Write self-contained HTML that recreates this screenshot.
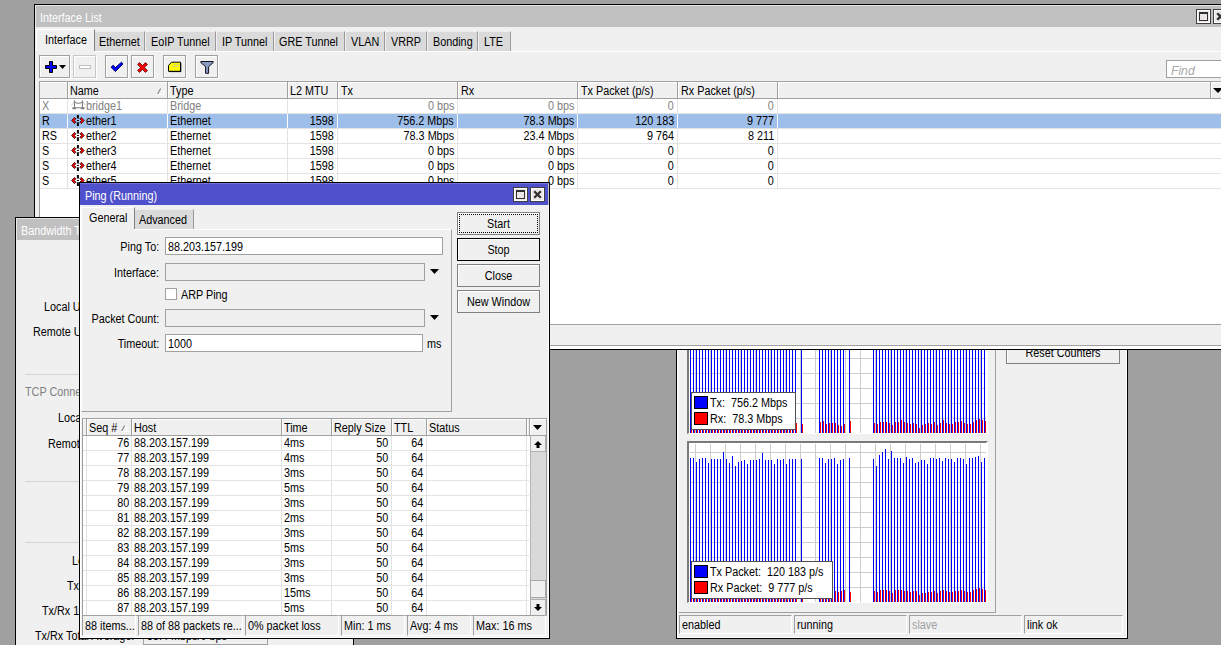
<!DOCTYPE html>
<html><head><meta charset="utf-8"><title>WinBox</title>
<style>
html,body{margin:0;padding:0}
body{width:1221px;height:645px;overflow:hidden;background:#a0a0a0;position:relative;font:12px/15px "Liberation Sans",sans-serif;color:#000}
div,span,svg{position:absolute;box-sizing:border-box;display:block}
.t{white-space:nowrap;height:15px;transform:scaleX(.9);transform-origin:0 0}
.r{transform-origin:100% 0}
.c{transform-origin:50% 0}
</style></head>
<body>
<div style="left:676px;top:300px;width:452px;height:339px;background:#f0f0f0;border:1px solid #000;box-shadow:inset 1px 0 0 #fff,inset -1px -1px 0 #fff"></div>
<div style="left:679px;top:320px;width:317px;height:293px;border-right:1px solid #a0a0a0;border-bottom:1px solid #a0a0a0"></div>
<div style="left:1006px;top:341px;width:114px;height:23px;background:#f0f0f0;border:1px solid #808080;box-shadow:inset 1px 1px 0 #fff"></div>
<span class="t c" style="left:1006px;top:346px;width:114px;text-align:center;">Reset Counters</span>
<div style="left:679px;top:615px;width:113px;height:19px;border-left:1px solid #a0a0a0;border-top:1px solid #a0a0a0;border-right:1px solid #fff;border-bottom:1px solid #fff"></div>
<span class="t" style="left:682px;top:618px;color:#000">enabled</span>
<div style="left:794px;top:615px;width:113px;height:19px;border-left:1px solid #a0a0a0;border-top:1px solid #a0a0a0;border-right:1px solid #fff;border-bottom:1px solid #fff"></div>
<span class="t" style="left:797px;top:618px;color:#000">running</span>
<div style="left:909px;top:615px;width:113px;height:19px;border-left:1px solid #a0a0a0;border-top:1px solid #a0a0a0;border-right:1px solid #fff;border-bottom:1px solid #fff"></div>
<span class="t" style="left:912px;top:618px;color:#a0a0a0">slave</span>
<div style="left:1024px;top:615px;width:99px;height:19px;border-left:1px solid #a0a0a0;border-top:1px solid #a0a0a0;border-right:1px solid #fff;border-bottom:1px solid #fff"></div>
<span class="t" style="left:1027px;top:618px;color:#000">link ok</span>
<div style="left:687px;top:330px;width:301px;height:104px;background:#fff;border-left:2px solid #7a7a7a;border-top:2px solid #7a7a7a;border-right:2px solid #fff;border-bottom:1px solid #fff"></div>
<svg style="left:689px;top:332px" width="297" height="101" viewBox="689 332 297 101" shape-rendering="crispEdges"><path d="M695 332v101M710 332v101M725 332v101M740 332v101M755 332v101M770 332v101M785 332v101M800 332v101M815 332v101M830 332v101M845 332v101M860 332v101M875 332v101M890 332v101M905 332v101M920 332v101M935 332v101M950 332v101M965 332v101M980 332v101M689 358h297M689 373h297M689 388h297M689 403h297M689 418h297" stroke="#cdcdcd" stroke-width="1" fill="none" transform="translate(.5 .5)"/><path d="M690 330V433M693 330V433M696 330V433M699 330V433M702 330V433M705 330V433M708 330V433M711 330V433M714 330V433M717 330V433M720 330V433M723 330V433M726 330V433M729 330V433M732 330V433M735 330V433M738 330V433M741 330V433M744 330V433M747 330V433M750 330V433M753 330V433M756 330V433M759 330V433M762 330V433M765 330V433M768 330V433M771 330V433M774 330V433M777 330V433M780 330V433M783 330V433M786 330V433M789 330V433M792 330V433M795 330V433M801 330V433M819 330V433M822 330V433M825 330V433M828 330V433M831 330V433M834 330V433M837 330V433M840 330V433M843 330V433M849 330V433M873 330V433M876 330V433M879 330V433M882 330V433M885 330V433M888 330V433M891 330V433M894 330V433M897 330V433M900 330V433M903 330V433M906 330V433M909 330V433M912 330V433M915 330V433M918 330V433M921 330V433M924 330V433M927 330V433M930 330V433M933 330V433M936 330V433M939 330V433M942 330V433M945 330V433M948 330V433M951 330V433M954 330V433M957 330V433M960 330V433M963 330V433M966 330V433M969 330V433M972 330V433M975 330V433M978 330V433M981 330V433M984 330V433" stroke="#0000ff" stroke-width="1" fill="none" transform="translate(.5 0)"/><path d="M691 423V433M694 422V433M697 423V433M700 424V433M703 425V433M706 423V433M709 424V433M712 423V433M715 424V433M718 424V433M721 424V433M724 423V433M727 424V433M730 424V433M733 423V433M736 423V433M739 423V433M742 423V433M745 422V433M748 422V433M751 422V433M754 424V433M757 425V433M760 423V433M763 424V433M766 424V433M769 425V433M772 424V433M775 425V433M778 423V433M781 423V433M784 425V433M787 423V433M790 422V433M793 424V433M796 423V433M802 424V433M820 422V433M823 421V433M826 424V433M829 423V433M832 423V433M835 423V433M838 425V433M841 426V433M844 424V433M850 421V433M874 423V433M877 424V433M880 422V433M883 422V433M886 422V433M889 423V433M892 425V433M895 422V433M898 422V433M901 420V433M904 422V433M907 423V433M910 424V433M913 423V433M916 424V433M919 428V433M922 425V433M925 424V433M928 423V433M931 424V433M934 422V433M937 425V433M940 423V433M943 420V433M946 423V433M949 424V433M952 424V433M955 422V433M958 422V433M961 421V433M964 423V433M967 424V433M970 424V433M973 422V433M976 420V433M979 419V433M982 420V433M985 421V433" stroke="#ff0000" stroke-width="1" fill="none" transform="translate(.5 0)"/></svg>
<div style="left:687px;top:441px;width:301px;height:162px;background:#fff;border-left:2px solid #7a7a7a;border-top:2px solid #7a7a7a;border-right:2px solid #fff;border-bottom:1px solid #fff"></div>
<svg style="left:689px;top:443px" width="297" height="159" viewBox="689 443 297 159" shape-rendering="crispEdges"><path d="M695 443v159M710 443v159M725 443v159M740 443v159M755 443v159M770 443v159M785 443v159M800 443v159M815 443v159M830 443v159M845 443v159M860 443v159M875 443v159M890 443v159M905 443v159M920 443v159M935 443v159M950 443v159M965 443v159M980 443v159M689 452h297M689 467h297M689 482h297M689 497h297M689 512h297M689 527h297M689 542h297M689 557h297M689 572h297M689 587h297" stroke="#cdcdcd" stroke-width="1" fill="none" transform="translate(.5 .5)"/><path d="M690 458V602M693 458V602M696 462V602M699 459V602M702 458V602M705 458V602M708 463V602M711 459V602M714 459V602M717 459V602M720 459V602M723 452V602M726 459V602M729 463V602M732 456V602M735 466V602M738 462V602M741 461V602M744 460V602M747 464V602M750 460V602M753 460V602M756 460V602M759 459V602M762 453V602M765 460V602M768 460V602M771 460V602M774 464V602M777 459V602M780 460V602M783 459V602M786 464V602M789 459V602M792 459V602M795 459V602M801 459V602M819 458V602M822 458V602M825 463V602M828 459V602M831 459V602M834 458V602M837 464V602M840 460V602M843 459V602M849 458V602M873 459V602M876 466V602M879 455V602M882 452V602M885 449V602M888 459V602M891 451V602M894 458V602M897 458V602M900 458V602M903 463V602M906 457V602M909 459V602M912 458V602M915 463V602M918 462V602M921 460V602M924 460V602M927 464V602M930 458V602M933 458V602M936 459V602M939 458V602M942 461V602M945 458V602M948 459V602M951 459V602M954 462V602M957 458V602M960 458V602M963 459V602M966 464V602M969 458V602M972 458V602M975 457V602M978 456V602M981 462V602M984 458V602" stroke="#0000ff" stroke-width="1" fill="none" transform="translate(.5 0)"/><path d="M691 591V602M694 591V602M697 590V602M700 593V602M703 592V602M706 592V602M709 591V602M712 590V602M715 590V602M718 590V602M721 592V602M724 592V602M727 591V602M730 590V602M733 591V602M736 592V602M739 592V602M742 591V602M745 591V602M748 591V602M751 590V602M754 591V602M757 591V602M760 590V602M763 593V602M766 591V602M769 591V602M772 591V602M775 591V602M778 591V602M781 591V602M784 593V602M787 593V602M790 591V602M793 590V602M796 592V602M802 591V602M820 593V602M823 592V602M826 592V602M829 591V602M832 591V602M835 591V602M838 592V602M841 591V602M844 590V602M850 592V602M874 591V602M877 592V602M880 590V602M883 590V602M886 590V602M889 591V602M892 593V602M895 590V602M898 590V602M901 590V602M904 591V602M907 591V602M910 592V602M913 591V602M916 591V602M919 595V602M922 593V602M925 593V602M928 592V602M931 592V602M934 591V602M937 593V602M940 591V602M943 590V602M946 591V602M949 592V602M952 592V602M955 591V602M958 591V602M961 590V602M964 591V602M967 592V602M970 592V602M973 590V602M976 589V602M979 588V602M982 589V602M985 590V602" stroke="#ff0000" stroke-width="1" fill="none" transform="translate(.5 0)"/></svg>
<div style="left:691px;top:392px;width:105px;height:38px;background:#fff;border:1px solid #505050"></div>
<div style="left:694px;top:396px;width:14px;height:13px;background:#0000ff;border:1px solid #000"></div>
<span class="t" style="left:710px;top:396px;white-space:pre">Tx:  756.2 Mbps</span>
<div style="left:694px;top:412px;width:14px;height:13px;background:#ff0000;border:1px solid #000"></div>
<span class="t" style="left:710px;top:412px;white-space:pre">Rx:  78.3 Mbps</span>
<div style="left:691px;top:561px;width:142px;height:38px;background:#fff;border:1px solid #505050"></div>
<div style="left:694px;top:565px;width:14px;height:13px;background:#0000ff;border:1px solid #000"></div>
<span class="t" style="left:710px;top:565px;white-space:pre">Tx Packet:  120 183 p/s</span>
<div style="left:694px;top:581px;width:14px;height:13px;background:#ff0000;border:1px solid #000"></div>
<span class="t" style="left:710px;top:581px;white-space:pre">Rx Packet:  9 777 p/s</span>
<div style="left:34px;top:4px;width:1200px;height:346px;background:#f0f0f0;border:1px solid #000"></div>
<div style="left:35px;top:5px;width:1190px;height:22px;background:#c0c0c0;border-left:1px solid #e8e8e8;border-top:1px solid #e4e4e4"></div>
<span class="t" style="left:40px;top:11px;color:#fff">Interface List</span>
<div style="left:1196px;top:9px;width:15px;height:15px;background:#ebe7e7;border:1px solid #404040;box-shadow:inset 0 0 0 1px #fff"></div>
<div style="left:1199px;top:12px;width:9px;height:9px;border:1px solid #303030;border-top-width:2px"></div>
<div style="left:1213px;top:9px;width:15px;height:15px;background:#ebe7e7;border:1px solid #404040;box-shadow:inset 0 0 0 1px #fff"></div>
<svg style="left:1216px;top:12px" width="9" height="9" viewBox="0 0 9 9"><path d="M1.2 1.2 L7.8 7.8 M7.8 1.2 L1.2 7.8" stroke="#303030" stroke-width="2.3" fill="none"/></svg>
<div style="left:36px;top:29px;width:59px;height:22px;background:#f0f0f0;border-left:1px solid #fff;border-top:1px solid #fff;border-right:1px solid #808080"></div>
<span class="t" style="left:45px;top:33px;">Interface</span>
<div style="left:95px;top:31px;width:50px;height:20px;background:#dadada;border-top:1px solid #ececec;border-right:1px solid #9a9a9a"></div>
<span class="t" style="left:99px;top:35px;">Ethernet</span>
<div style="left:146px;top:31px;width:70px;height:20px;background:#dadada;border-top:1px solid #ececec;border-right:1px solid #9a9a9a"></div>
<span class="t" style="left:151px;top:35px;">EoIP Tunnel</span>
<div style="left:217px;top:31px;width:57px;height:20px;background:#dadada;border-top:1px solid #ececec;border-right:1px solid #9a9a9a"></div>
<span class="t" style="left:222px;top:35px;">IP Tunnel</span>
<div style="left:275px;top:31px;width:70px;height:20px;background:#dadada;border-top:1px solid #ececec;border-right:1px solid #9a9a9a"></div>
<span class="t" style="left:279px;top:35px;">GRE Tunnel</span>
<div style="left:346px;top:31px;width:39px;height:20px;background:#dadada;border-top:1px solid #ececec;border-right:1px solid #9a9a9a"></div>
<span class="t" style="left:351px;top:35px;">VLAN</span>
<div style="left:386px;top:31px;width:41px;height:20px;background:#dadada;border-top:1px solid #ececec;border-right:1px solid #9a9a9a"></div>
<span class="t" style="left:391px;top:35px;">VRRP</span>
<div style="left:428px;top:31px;width:50px;height:20px;background:#dadada;border-top:1px solid #ececec;border-right:1px solid #9a9a9a"></div>
<span class="t" style="left:433px;top:35px;">Bonding</span>
<div style="left:479px;top:31px;width:32px;height:20px;background:#dadada;border-top:1px solid #ececec;border-right:1px solid #9a9a9a"></div>
<span class="t" style="left:484px;top:35px;">LTE</span>
<div style="left:95px;top:51px;width:1131px;height:1px;background:#fff"></div>
<div style="left:39px;top:55px;width:31px;height:23px;background:#f0f0f0;border:1px solid #a0a0a0;box-shadow:inset 1px 1px 0 #fff,1px 1px 0 #fff"></div>
<div style="left:73px;top:55px;width:23px;height:23px;background:#f0f0f0;border:1px solid #c8c8c8;box-shadow:inset 1px 1px 0 #fff,1px 1px 0 #fff"></div>
<div style="left:105px;top:55px;width:23px;height:23px;background:#f0f0f0;border:1px solid #a0a0a0;box-shadow:inset 1px 1px 0 #fff,1px 1px 0 #fff"></div>
<div style="left:131px;top:55px;width:23px;height:23px;background:#f0f0f0;border:1px solid #a0a0a0;box-shadow:inset 1px 1px 0 #fff,1px 1px 0 #fff"></div>
<div style="left:163px;top:55px;width:23px;height:23px;background:#f0f0f0;border:1px solid #a0a0a0;box-shadow:inset 1px 1px 0 #fff,1px 1px 0 #fff"></div>
<div style="left:195px;top:55px;width:23px;height:23px;background:#f0f0f0;border:1px solid #a0a0a0;box-shadow:inset 1px 1px 0 #fff,1px 1px 0 #fff"></div>
<svg style="left:45px;top:61px" width="22" height="13" viewBox="0 0 22 13"><path d="M4.5 .5h3v4h4v3h-4v4h-3v-4h-4v-3h4z" fill="#0000ff" stroke="#000" stroke-width="1"/><path d="M14 4h7l-3.5 4z" fill="#000"/></svg>
<div style="left:79px;top:65px;width:12px;height:4px;background:#fff;border:1px solid #c0c0c0"></div>
<svg style="left:110px;top:61px" width="14" height="12" viewBox="0 0 14 12"><path d="M1 6.2 L3.2 4.2 L5.4 6.6 L11.4 1.2 L13 3 L5.4 10.6 Z" fill="#0000ff" stroke="#00005a" stroke-width=".9"/></svg>
<svg style="left:137px;top:62px" width="11" height="11" viewBox="0 0 11 11"><path d="M.6 2.5L2.5 .6L5.5 3.6L8.5 .6L10.4 2.5L7.4 5.5L10.4 8.5L8.5 10.4L5.5 7.4L2.5 10.4L.6 8.5L3.6 5.5Z" fill="#ff0000" stroke="#500000" stroke-width=".8"/></svg>
<svg style="left:167px;top:61px" width="15" height="12" viewBox="0 0 15 12"><path d="M1.5 4.5L4.5 1.2H13.5V10.3H1.5Z" fill="#ffff00" stroke="#000" stroke-width="1"/><path d="M2 10.6H14M13.8 2V10.6" stroke="#000" stroke-width="1" fill="none"/><path d="M7 3.5h2M10 3.5h2M5.5 5.5h2M8.5 5.5h3" stroke="#c8c890" stroke-width="1"/></svg>
<svg style="left:200px;top:60px" width="14" height="14" viewBox="0 0 14 14"><path d="M.8 1.5H13.2V2.6L8.6 6.6V13.3H5.6V6.6L.8 2.6Z" fill="#8c9cc0" stroke="#101020" stroke-width="1"/></svg>
<div style="left:1166px;top:60px;width:70px;height:18px;background:#fff;border:1px solid #a0a0a0"></div>
<span class="t" style="left:1171px;top:63px;color:#a8a8a8;font-style:italic;font-size:13.5px">Find</span>
<div style="left:39px;top:81px;width:1190px;height:244px;background:#fff;border:1px solid #a0a0a0"></div>
<div style="left:40px;top:82px;width:1185px;height:16px;background:#f0f0f0;border-top:1px solid #fff"></div>
<div style="left:40px;top:98px;width:1185px;height:1px;background:#a0a0a0"></div>
<div style="left:67px;top:82px;width:2px;height:16px;background:#fff;border-left:1px solid #a0a0a0"></div>
<div style="left:167px;top:82px;width:2px;height:16px;background:#fff;border-left:1px solid #a0a0a0"></div>
<div style="left:287px;top:82px;width:2px;height:16px;background:#fff;border-left:1px solid #a0a0a0"></div>
<div style="left:337px;top:82px;width:2px;height:16px;background:#fff;border-left:1px solid #a0a0a0"></div>
<div style="left:457px;top:82px;width:2px;height:16px;background:#fff;border-left:1px solid #a0a0a0"></div>
<div style="left:577px;top:82px;width:2px;height:16px;background:#fff;border-left:1px solid #a0a0a0"></div>
<div style="left:677px;top:82px;width:2px;height:16px;background:#fff;border-left:1px solid #a0a0a0"></div>
<div style="left:777px;top:82px;width:2px;height:16px;background:#fff;border-left:1px solid #a0a0a0"></div>
<div style="left:1210px;top:82px;width:2px;height:16px;background:#fff;border-left:1px solid #a0a0a0"></div>
<svg style="left:1213px;top:88px" width="10" height="5" viewBox="0 0 10 5"><path d="M0 0h10l-5 5z" fill="#000"/></svg>
<span class="t" style="left:70px;top:84px;">Name</span>
<span class="t" style="left:170px;top:84px;">Type</span>
<span class="t" style="left:290px;top:84px;">L2 MTU</span>
<span class="t" style="left:341px;top:84px;">Tx</span>
<span class="t" style="left:461px;top:84px;">Rx</span>
<span class="t" style="left:581px;top:84px;">Tx Packet (p/s)</span>
<span class="t" style="left:681px;top:84px;">Rx Packet (p/s)</span>
<svg style="left:157px;top:88px" width="8" height="7" viewBox="0 0 8 7"><path d="M3.9 .3 L7.5 6.5 H.3" stroke="#fff" stroke-width="1" fill="none"/><path d="M.6 6 L3.7 .5" stroke="#808080" stroke-width="1.1" fill="none"/></svg>
<div style="left:40px;top:113px;width:1185px;height:1px;background:#e3e3e3"></div>
<span class="t" style="left:42px;top:99px;color:#808080">X</span>
<svg style="left:71px;top:99px" width="15" height="11" viewBox="0 0 15 11"><path d="M3.5 1.2V9M11.5 1.2V9M1.3 8.8H13.7M1.5 9.6H5.2M9.8 9.6H13.5M3.5 3Q7.5 5.6 11.5 3" stroke="#808080" stroke-width="1.1" fill="none"/><path d="M3.5 3L.3 6.4M11.5 3L14.7 6.4" stroke="#9c9c9c" stroke-width="1" stroke-dasharray="1.4 .8" fill="none"/></svg>
<span class="t" style="left:86px;top:99px;color:#808080">bridge1</span>
<span class="t" style="left:170px;top:99px;color:#808080">Bridge</span>
<span class="t r" style="right:767px;top:99px;color:#808080">0 bps</span>
<span class="t r" style="right:647px;top:99px;color:#808080">0 bps</span>
<span class="t r" style="right:547px;top:99px;color:#808080">0</span>
<span class="t r" style="right:447px;top:99px;color:#808080">0</span>
<div style="left:40px;top:114px;width:1185px;height:14px;background:#9ebfe9"></div>
<div style="left:40px;top:128px;width:1185px;height:1px;background:#e3e3e3"></div>
<span class="t" style="left:42px;top:114px;color:#000">R</span>
<svg style="left:71px;top:115px" width="14" height="12" viewBox="0 0 14 12"><path d="M.6 5.5L3.5 2.4L4.9 3.8L3.3 5.5L4.9 7.2L3.5 8.6ZM13.2 5.5L10.3 2.4L8.9 3.8L10.5 5.5L8.9 7.2L10.3 8.6Z" fill="#ff0000" stroke="#200000" stroke-width=".8" stroke-linejoin="round"/><path d="M6.9 0V3.6M6.9 7.2V10.9" stroke="#000" stroke-width="2"/><path d="M5.9 5.5H7.9" stroke="#000" stroke-width="1"/></svg>
<span class="t" style="left:86px;top:114px;color:#000">ether1</span>
<span class="t" style="left:170px;top:114px;color:#000">Ethernet</span>
<span class="t r" style="right:887px;top:114px;color:#000">1598</span>
<span class="t r" style="right:767px;top:114px;color:#000">756.2 Mbps</span>
<span class="t r" style="right:647px;top:114px;color:#000">78.3 Mbps</span>
<span class="t r" style="right:547px;top:114px;color:#000">120 183</span>
<span class="t r" style="right:447px;top:114px;color:#000">9 777</span>
<div style="left:40px;top:143px;width:1185px;height:1px;background:#e3e3e3"></div>
<span class="t" style="left:42px;top:129px;color:#000">RS</span>
<svg style="left:71px;top:130px" width="14" height="12" viewBox="0 0 14 12"><path d="M.6 5.5L3.5 2.4L4.9 3.8L3.3 5.5L4.9 7.2L3.5 8.6ZM13.2 5.5L10.3 2.4L8.9 3.8L10.5 5.5L8.9 7.2L10.3 8.6Z" fill="#ff0000" stroke="#200000" stroke-width=".8" stroke-linejoin="round"/><path d="M6.9 0V3.6M6.9 7.2V10.9" stroke="#000" stroke-width="2"/><path d="M5.9 5.5H7.9" stroke="#000" stroke-width="1"/></svg>
<span class="t" style="left:86px;top:129px;color:#000">ether2</span>
<span class="t" style="left:170px;top:129px;color:#000">Ethernet</span>
<span class="t r" style="right:887px;top:129px;color:#000">1598</span>
<span class="t r" style="right:767px;top:129px;color:#000">78.3 Mbps</span>
<span class="t r" style="right:647px;top:129px;color:#000">23.4 Mbps</span>
<span class="t r" style="right:547px;top:129px;color:#000">9 764</span>
<span class="t r" style="right:447px;top:129px;color:#000">8 211</span>
<div style="left:40px;top:158px;width:1185px;height:1px;background:#e3e3e3"></div>
<span class="t" style="left:42px;top:144px;color:#000">S</span>
<svg style="left:71px;top:145px" width="14" height="12" viewBox="0 0 14 12"><path d="M.6 5.5L3.5 2.4L4.9 3.8L3.3 5.5L4.9 7.2L3.5 8.6ZM13.2 5.5L10.3 2.4L8.9 3.8L10.5 5.5L8.9 7.2L10.3 8.6Z" fill="#ff0000" stroke="#200000" stroke-width=".8" stroke-linejoin="round"/><path d="M6.9 0V3.6M6.9 7.2V10.9" stroke="#000" stroke-width="2"/><path d="M5.9 5.5H7.9" stroke="#000" stroke-width="1"/></svg>
<span class="t" style="left:86px;top:144px;color:#000">ether3</span>
<span class="t" style="left:170px;top:144px;color:#000">Ethernet</span>
<span class="t r" style="right:887px;top:144px;color:#000">1598</span>
<span class="t r" style="right:767px;top:144px;color:#000">0 bps</span>
<span class="t r" style="right:647px;top:144px;color:#000">0 bps</span>
<span class="t r" style="right:547px;top:144px;color:#000">0</span>
<span class="t r" style="right:447px;top:144px;color:#000">0</span>
<div style="left:40px;top:173px;width:1185px;height:1px;background:#e3e3e3"></div>
<span class="t" style="left:42px;top:159px;color:#000">S</span>
<svg style="left:71px;top:160px" width="14" height="12" viewBox="0 0 14 12"><path d="M.6 5.5L3.5 2.4L4.9 3.8L3.3 5.5L4.9 7.2L3.5 8.6ZM13.2 5.5L10.3 2.4L8.9 3.8L10.5 5.5L8.9 7.2L10.3 8.6Z" fill="#ff0000" stroke="#200000" stroke-width=".8" stroke-linejoin="round"/><path d="M6.9 0V3.6M6.9 7.2V10.9" stroke="#000" stroke-width="2"/><path d="M5.9 5.5H7.9" stroke="#000" stroke-width="1"/></svg>
<span class="t" style="left:86px;top:159px;color:#000">ether4</span>
<span class="t" style="left:170px;top:159px;color:#000">Ethernet</span>
<span class="t r" style="right:887px;top:159px;color:#000">1598</span>
<span class="t r" style="right:767px;top:159px;color:#000">0 bps</span>
<span class="t r" style="right:647px;top:159px;color:#000">0 bps</span>
<span class="t r" style="right:547px;top:159px;color:#000">0</span>
<span class="t r" style="right:447px;top:159px;color:#000">0</span>
<div style="left:40px;top:188px;width:1185px;height:1px;background:#e3e3e3"></div>
<span class="t" style="left:42px;top:174px;color:#000">S</span>
<svg style="left:71px;top:175px" width="14" height="12" viewBox="0 0 14 12"><path d="M.6 5.5L3.5 2.4L4.9 3.8L3.3 5.5L4.9 7.2L3.5 8.6ZM13.2 5.5L10.3 2.4L8.9 3.8L10.5 5.5L8.9 7.2L10.3 8.6Z" fill="#ff0000" stroke="#200000" stroke-width=".8" stroke-linejoin="round"/><path d="M6.9 0V3.6M6.9 7.2V10.9" stroke="#000" stroke-width="2"/><path d="M5.9 5.5H7.9" stroke="#000" stroke-width="1"/></svg>
<span class="t" style="left:86px;top:174px;color:#000">ether5</span>
<span class="t" style="left:170px;top:174px;color:#000">Ethernet</span>
<span class="t r" style="right:887px;top:174px;color:#000">1598</span>
<span class="t r" style="right:767px;top:174px;color:#000">0 bps</span>
<span class="t r" style="right:647px;top:174px;color:#000">0 bps</span>
<span class="t r" style="right:547px;top:174px;color:#000">0</span>
<span class="t r" style="right:447px;top:174px;color:#000">0</span>
<div style="left:67px;top:99px;width:1px;height:90px;background:#e3e3e3"></div>
<div style="left:167px;top:99px;width:1px;height:90px;background:#e3e3e3"></div>
<div style="left:287px;top:99px;width:1px;height:90px;background:#e3e3e3"></div>
<div style="left:337px;top:99px;width:1px;height:90px;background:#e3e3e3"></div>
<div style="left:457px;top:99px;width:1px;height:90px;background:#e3e3e3"></div>
<div style="left:577px;top:99px;width:1px;height:90px;background:#e3e3e3"></div>
<div style="left:677px;top:99px;width:1px;height:90px;background:#e3e3e3"></div>
<div style="left:777px;top:99px;width:1px;height:90px;background:#e3e3e3"></div>
<div style="left:67px;top:114px;width:1px;height:14px;background:#fff"></div>
<div style="left:167px;top:114px;width:1px;height:14px;background:#fff"></div>
<div style="left:287px;top:114px;width:1px;height:14px;background:#fff"></div>
<div style="left:337px;top:114px;width:1px;height:14px;background:#fff"></div>
<div style="left:457px;top:114px;width:1px;height:14px;background:#fff"></div>
<div style="left:577px;top:114px;width:1px;height:14px;background:#fff"></div>
<div style="left:677px;top:114px;width:1px;height:14px;background:#fff"></div>
<div style="left:777px;top:114px;width:1px;height:14px;background:#fff"></div>
<div style="left:40px;top:324px;width:1185px;height:1px;background:#a0a0a0"></div>
<div style="left:40px;top:325px;width:1185px;height:20px;background:#f0f0f0"></div>
<div style="left:35px;top:345px;width:1190px;height:1px;background:#a0a0a0"></div>
<div style="left:35px;top:346px;width:1190px;height:3px;background:#fff"></div>
<div style="left:15px;top:217px;width:339px;height:440px;background:#f0f0f0;border:1px solid #000"></div>
<div style="left:16px;top:218px;width:337px;height:22px;background:#c0c0c0;border-left:1px solid #e8e8e8;border-top:1px solid #e4e4e4"></div>
<span class="t" style="left:21px;top:224px;color:#fff">Bandwidth Test</span>
<span class="t" style="left:44px;top:300px;">Local UDP Tx Size:</span>
<span class="t" style="left:33px;top:325px;">Remote UDP Tx Size:</span>
<div style="left:25px;top:374px;width:320px;height:1px;background:#d4d4d4"></div>
<span class="t" style="left:25px;top:385px;color:#808080">TCP Connection Count:</span>
<span class="t" style="left:58px;top:411px;">Local Tx Speed:</span>
<span class="t" style="left:48px;top:437px;">Remote Tx Speed:</span>
<div style="left:25px;top:481px;width:320px;height:1px;background:#d4d4d4"></div>
<div style="left:25px;top:542px;width:320px;height:1px;background:#d4d4d4"></div>
<span class="t" style="left:72px;top:554px;">Lost Packets:</span>
<span class="t" style="left:67px;top:579px;">Tx/Rx Current:</span>
<span class="t" style="left:42px;top:604px;">Tx/Rx 10s Average:</span>
<span class="t" style="left:35px;top:629px;">Tx/Rx Total Average:</span>
<div style="left:143px;top:627px;width:125px;height:18px;background:#f0f0f0;border:1px solid #a0a0a0"></div>
<span class="t" style="left:147px;top:629px;">58.4 Mbps/0 bps</span>
<div style="left:79px;top:182px;width:471px;height:457px;background:#f0f0f0;border:1px solid #000;box-shadow:inset 1px 0 0 #fff,inset -1px -1px 0 #fff"></div>
<div style="left:80px;top:183px;width:469px;height:22px;background:#4f50cb;border-top:1px solid #7474d6;border-right:1px solid #c0c0c0"></div>
<span class="t" style="left:85px;top:189px;color:#fff">Ping (Running)</span>
<div style="left:513px;top:187px;width:15px;height:15px;background:#ebe7e7;border:1px solid #404040;box-shadow:inset 0 0 0 1px #fff"></div>
<div style="left:516px;top:190px;width:9px;height:9px;border:1px solid #303030;border-top-width:2px"></div>
<div style="left:530px;top:187px;width:15px;height:15px;background:#ebe7e7;border:1px solid #404040;box-shadow:inset 0 0 0 1px #fff"></div>
<svg style="left:533px;top:190px" width="9" height="9" viewBox="0 0 9 9"><path d="M1.2 1.2 L7.8 7.8 M7.8 1.2 L1.2 7.8" stroke="#303030" stroke-width="2.3" fill="none"/></svg>
<div style="left:81px;top:229px;width:371px;height:183px;border-top:1px solid #fff;border-left:1px solid #fff;border-right:1px solid #a0a0a0;border-bottom:1px solid #a0a0a0"></div>
<div style="left:81px;top:207px;width:54px;height:22px;background:#f0f0f0;border-left:1px solid #fff;border-top:1px solid #fff;border-right:1px solid #808080"></div>
<div style="left:82px;top:229px;width:52px;height:1px;background:#f0f0f0"></div>
<span class="t" style="left:89px;top:211px;">General</span>
<div style="left:135px;top:209px;width:59px;height:20px;background:#dadada;border-top:1px solid #ececec;border-right:1px solid #9a9a9a"></div>
<span class="t" style="left:139px;top:213px;">Advanced</span>
<span class="t r" style="right:1062px;top:240px;">Ping To:</span>
<div style="left:165px;top:237px;width:278px;height:18px;background:#fff;border:1px solid #a0a0a0"></div>
<span class="t" style="left:168px;top:240px;">88.203.157.199</span>
<span class="t r" style="right:1062px;top:266px;">Interface:</span>
<div style="left:165px;top:263px;width:260px;height:18px;background:#f0f0f0;border:1px solid #a0a0a0"></div>
<svg style="left:430px;top:269px" width="9" height="5" viewBox="0 0 9 5"><path d="M0 0h9l-4.5 5z" fill="#000"/></svg>
<div style="left:165px;top:288px;width:12px;height:12px;background:#fff;border:1px solid #a0a0a0"></div>
<span class="t" style="left:181px;top:288px;">ARP Ping</span>
<span class="t r" style="right:1062px;top:312px;">Packet Count:</span>
<div style="left:165px;top:309px;width:260px;height:18px;background:#f0f0f0;border:1px solid #a0a0a0"></div>
<svg style="left:430px;top:315px" width="9" height="5" viewBox="0 0 9 5"><path d="M0 0h9l-4.5 5z" fill="#000"/></svg>
<span class="t r" style="right:1062px;top:337px;">Timeout:</span>
<div style="left:165px;top:334px;width:258px;height:18px;background:#fff;border:1px solid #a0a0a0"></div>
<span class="t" style="left:168px;top:337px;">1000</span>
<span class="t" style="left:427px;top:337px;">ms</span>
<div style="left:457px;top:212px;width:83px;height:23px;background:#f0f0f0;border:1px solid #808080;box-shadow:inset 1px 1px 0 #fff"></div>
<div style="left:459px;top:214px;width:79px;height:19px;border:1px dotted #000"></div>
<span class="t c" style="left:457px;top:217px;width:83px;text-align:center;">Start</span>
<div style="left:457px;top:238px;width:83px;height:23px;background:#f0f0f0;border:1px solid #000;box-shadow:inset 1px 1px 0 #fff"></div>
<span class="t c" style="left:457px;top:243px;width:83px;text-align:center;">Stop</span>
<div style="left:457px;top:264px;width:83px;height:23px;background:#f0f0f0;border:1px solid #808080;box-shadow:inset 1px 1px 0 #fff"></div>
<span class="t c" style="left:457px;top:269px;width:83px;text-align:center;">Close</span>
<div style="left:457px;top:290px;width:83px;height:23px;background:#f0f0f0;border:1px solid #808080;box-shadow:inset 1px 1px 0 #fff"></div>
<span class="t c" style="left:457px;top:295px;width:83px;text-align:center;">New Window</span>
<div style="left:82px;top:418px;width:465px;height:198px;background:#fff;border:1px solid #a0a0a0"></div>
<div style="left:83px;top:419px;width:463px;height:16px;background:#f0f0f0;border-top:1px solid #fff"></div>
<div style="left:83px;top:435px;width:463px;height:1px;background:#a0a0a0"></div>
<div style="left:86px;top:419px;width:2px;height:16px;background:#fff;border-left:1px solid #a0a0a0"></div>
<div style="left:131px;top:419px;width:2px;height:16px;background:#fff;border-left:1px solid #a0a0a0"></div>
<div style="left:281px;top:419px;width:2px;height:16px;background:#fff;border-left:1px solid #a0a0a0"></div>
<div style="left:331px;top:419px;width:2px;height:16px;background:#fff;border-left:1px solid #a0a0a0"></div>
<div style="left:391px;top:419px;width:2px;height:16px;background:#fff;border-left:1px solid #a0a0a0"></div>
<div style="left:426px;top:419px;width:2px;height:16px;background:#fff;border-left:1px solid #a0a0a0"></div>
<div style="left:526px;top:419px;width:2px;height:16px;background:#fff;border-left:1px solid #a0a0a0"></div>
<div style="left:529px;top:419px;width:2px;height:16px;background:#fff;border-left:1px solid #a0a0a0"></div>
<svg style="left:533px;top:425px" width="9" height="5" viewBox="0 0 9 5"><path d="M0 0h9l-4.5 5z" fill="#000"/></svg>
<span class="t" style="left:89px;top:421px;">Seq #</span>
<span class="t" style="left:134px;top:421px;">Host</span>
<span class="t" style="left:284px;top:421px;">Time</span>
<span class="t" style="left:334px;top:421px;">Reply Size</span>
<span class="t" style="left:394px;top:421px;">TTL</span>
<span class="t" style="left:429px;top:421px;">Status</span>
<svg style="left:121px;top:425px" width="8" height="7" viewBox="0 0 8 7"><path d="M3.9 .3 L7.5 6.5 H.3" stroke="#fff" stroke-width="1" fill="none"/><path d="M.6 6 L3.7 .5" stroke="#808080" stroke-width="1.1" fill="none"/></svg>
<div style="left:83px;top:450px;width:446px;height:1px;background:#e3e3e3"></div>
<span class="t r" style="right:1092px;top:436px;">76</span>
<span class="t" style="left:134px;top:436px;">88.203.157.199</span>
<span class="t" style="left:284px;top:436px;">4ms</span>
<span class="t r" style="right:833px;top:436px;">50</span>
<span class="t r" style="right:798px;top:436px;">64</span>
<div style="left:83px;top:465px;width:446px;height:1px;background:#e3e3e3"></div>
<span class="t r" style="right:1092px;top:451px;">77</span>
<span class="t" style="left:134px;top:451px;">88.203.157.199</span>
<span class="t" style="left:284px;top:451px;">4ms</span>
<span class="t r" style="right:833px;top:451px;">50</span>
<span class="t r" style="right:798px;top:451px;">64</span>
<div style="left:83px;top:480px;width:446px;height:1px;background:#e3e3e3"></div>
<span class="t r" style="right:1092px;top:466px;">78</span>
<span class="t" style="left:134px;top:466px;">88.203.157.199</span>
<span class="t" style="left:284px;top:466px;">3ms</span>
<span class="t r" style="right:833px;top:466px;">50</span>
<span class="t r" style="right:798px;top:466px;">64</span>
<div style="left:83px;top:495px;width:446px;height:1px;background:#e3e3e3"></div>
<span class="t r" style="right:1092px;top:481px;">79</span>
<span class="t" style="left:134px;top:481px;">88.203.157.199</span>
<span class="t" style="left:284px;top:481px;">5ms</span>
<span class="t r" style="right:833px;top:481px;">50</span>
<span class="t r" style="right:798px;top:481px;">64</span>
<div style="left:83px;top:510px;width:446px;height:1px;background:#e3e3e3"></div>
<span class="t r" style="right:1092px;top:496px;">80</span>
<span class="t" style="left:134px;top:496px;">88.203.157.199</span>
<span class="t" style="left:284px;top:496px;">3ms</span>
<span class="t r" style="right:833px;top:496px;">50</span>
<span class="t r" style="right:798px;top:496px;">64</span>
<div style="left:83px;top:525px;width:446px;height:1px;background:#e3e3e3"></div>
<span class="t r" style="right:1092px;top:511px;">81</span>
<span class="t" style="left:134px;top:511px;">88.203.157.199</span>
<span class="t" style="left:284px;top:511px;">2ms</span>
<span class="t r" style="right:833px;top:511px;">50</span>
<span class="t r" style="right:798px;top:511px;">64</span>
<div style="left:83px;top:540px;width:446px;height:1px;background:#e3e3e3"></div>
<span class="t r" style="right:1092px;top:526px;">82</span>
<span class="t" style="left:134px;top:526px;">88.203.157.199</span>
<span class="t" style="left:284px;top:526px;">3ms</span>
<span class="t r" style="right:833px;top:526px;">50</span>
<span class="t r" style="right:798px;top:526px;">64</span>
<div style="left:83px;top:555px;width:446px;height:1px;background:#e3e3e3"></div>
<span class="t r" style="right:1092px;top:541px;">83</span>
<span class="t" style="left:134px;top:541px;">88.203.157.199</span>
<span class="t" style="left:284px;top:541px;">5ms</span>
<span class="t r" style="right:833px;top:541px;">50</span>
<span class="t r" style="right:798px;top:541px;">64</span>
<div style="left:83px;top:570px;width:446px;height:1px;background:#e3e3e3"></div>
<span class="t r" style="right:1092px;top:556px;">84</span>
<span class="t" style="left:134px;top:556px;">88.203.157.199</span>
<span class="t" style="left:284px;top:556px;">3ms</span>
<span class="t r" style="right:833px;top:556px;">50</span>
<span class="t r" style="right:798px;top:556px;">64</span>
<div style="left:83px;top:585px;width:446px;height:1px;background:#e3e3e3"></div>
<span class="t r" style="right:1092px;top:571px;">85</span>
<span class="t" style="left:134px;top:571px;">88.203.157.199</span>
<span class="t" style="left:284px;top:571px;">3ms</span>
<span class="t r" style="right:833px;top:571px;">50</span>
<span class="t r" style="right:798px;top:571px;">64</span>
<div style="left:83px;top:600px;width:446px;height:1px;background:#e3e3e3"></div>
<span class="t r" style="right:1092px;top:586px;">86</span>
<span class="t" style="left:134px;top:586px;">88.203.157.199</span>
<span class="t" style="left:284px;top:586px;">15ms</span>
<span class="t r" style="right:833px;top:586px;">50</span>
<span class="t r" style="right:798px;top:586px;">64</span>
<span class="t r" style="right:1092px;top:601px;">87</span>
<span class="t" style="left:134px;top:601px;">88.203.157.199</span>
<span class="t" style="left:284px;top:601px;">5ms</span>
<span class="t r" style="right:833px;top:601px;">50</span>
<span class="t r" style="right:798px;top:601px;">64</span>
<div style="left:86px;top:436px;width:1px;height:179px;background:#e3e3e3"></div>
<div style="left:131px;top:436px;width:1px;height:179px;background:#e3e3e3"></div>
<div style="left:281px;top:436px;width:1px;height:179px;background:#e3e3e3"></div>
<div style="left:331px;top:436px;width:1px;height:179px;background:#e3e3e3"></div>
<div style="left:391px;top:436px;width:1px;height:179px;background:#e3e3e3"></div>
<div style="left:426px;top:436px;width:1px;height:179px;background:#e3e3e3"></div>
<div style="left:526px;top:436px;width:1px;height:179px;background:#e3e3e3"></div>
<div style="left:530px;top:436px;width:16px;height:179px;background:#d9d9d9;border-left:1px solid #b4b4b4"></div>
<div style="left:530px;top:436px;width:16px;height:16px;background:#f0f0f0;border:1px solid #b0b0b0;border-top:0"></div>
<div style="left:530px;top:599px;width:16px;height:16px;background:#f0f0f0;border:1px solid #b0b0b0;border-bottom:0"></div>
<div style="left:530px;top:580px;width:16px;height:18px;background:#f0f0f0;border:1px solid #a8a8a8"></div>
<svg style="left:534px;top:441px" width="8" height="7" viewBox="0 0 8 7"><path d="M4 0 L8 4 H5.5 V7 H2.5 V4 H0 Z" fill="#000"/></svg>
<svg style="left:534px;top:604px" width="8" height="7" viewBox="0 0 8 7"><path d="M4 7 L8 3 H5.5 V0 H2.5 V3 H0 Z" fill="#000"/></svg>
<div style="left:82px;top:615px;width:54px;height:21px;border-left:1px solid #a0a0a0;border-top:1px solid #a0a0a0;border-right:1px solid #fff;border-bottom:1px solid #fff"></div>
<span class="t" style="left:85px;top:619px;">88 items...</span>
<div style="left:138px;top:615px;width:105px;height:21px;border-left:1px solid #a0a0a0;border-top:1px solid #a0a0a0;border-right:1px solid #fff;border-bottom:1px solid #fff"></div>
<span class="t" style="left:141px;top:619px;">88 of 88 packets re...</span>
<div style="left:245px;top:615px;width:94px;height:21px;border-left:1px solid #a0a0a0;border-top:1px solid #a0a0a0;border-right:1px solid #fff;border-bottom:1px solid #fff"></div>
<span class="t" style="left:248px;top:619px;">0% packet loss</span>
<div style="left:341px;top:615px;width:64px;height:21px;border-left:1px solid #a0a0a0;border-top:1px solid #a0a0a0;border-right:1px solid #fff;border-bottom:1px solid #fff"></div>
<span class="t" style="left:344px;top:619px;">Min: 1 ms</span>
<div style="left:407px;top:615px;width:64px;height:21px;border-left:1px solid #a0a0a0;border-top:1px solid #a0a0a0;border-right:1px solid #fff;border-bottom:1px solid #fff"></div>
<span class="t" style="left:410px;top:619px;">Avg: 4 ms</span>
<div style="left:473px;top:615px;width:73px;height:21px;border-left:1px solid #a0a0a0;border-top:1px solid #a0a0a0;border-right:1px solid #fff;border-bottom:1px solid #fff"></div>
<span class="t" style="left:476px;top:619px;">Max: 16 ms</span>
</body></html>
